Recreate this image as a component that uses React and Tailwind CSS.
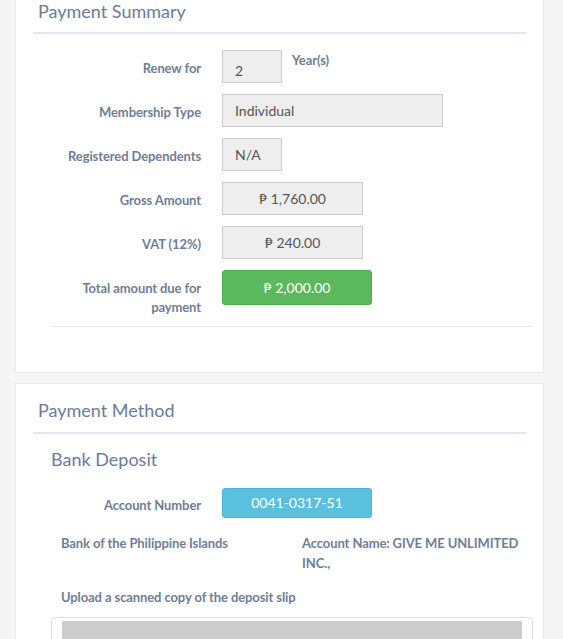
import React from 'react';

const Row = ({ label, children, className = 'mb-[11px]' }) => (
  <div className={`flex ${className}`}>
    <div className="w-[150px] shrink-0 pt-[9px] text-right text-[13px] leading-[19px] font-bold tracking-[-0.1px] text-[#6f7e95]">
      {label}
    </div>
    <div className="ml-[21px] flex items-start">{children}</div>
  </div>
);

const Box = ({ w, children, center }) => (
  <div
    className={`h-[33px] ${w} border border-[#cccccc] bg-[#eeeeee] text-[14px] text-[#555555] leading-[31px] ${
      center ? 'text-center' : 'px-[12px]'
    }`}
  >
    {children}
  </div>
);

const App = () => {
  return (
    <div className="h-[639px] overflow-hidden bg-[#f5f5f5] font-['Lato','Noto_Sans',sans-serif]">
      {/* Payment Summary */}
      <section className="ml-[15px] w-[529px] bg-white border border-t-0 border-[#e7e9ee]">
        <div className="mx-[17px]">
          <h3 className="pl-[5px] text-[18px] leading-[22px] text-[#6c7c94] mb-[10px]">Payment Summary</h3>
          <div className="h-[2px] bg-[#e4e8ee]" />
        </div>

        <div className="ml-[35px] mr-[10px] mt-[16px]">
          <Row label="Renew for">
            <div className="h-[33px] w-[60px] border border-[#cccccc] bg-[#eeeeee] pl-[12px] pt-[9px] text-[14px] leading-[22px] text-[#555555]">
              2
            </div>
            <span className="ml-[10px] mt-[1px] text-[13px] leading-[18px] font-bold tracking-[-0.1px] text-[#6f7e95]">Year(s)</span>
          </Row>
          <Row label="Membership Type">
            <Box w="w-[221px]">Individual</Box>
          </Row>
          <Row label="Registered Dependents">
            <Box w="w-[60px]">N/A</Box>
          </Row>
          <Row label="Gross Amount">
            <Box w="w-[141px]" center>₱ 1,760.00</Box>
          </Row>
          <Row label="VAT (12%)">
            <Box w="w-[141px]" center>₱ 240.00</Box>
          </Row>
          <Row label="Total amount due for payment" className="mb-[9px]">
            <div className="h-[35px] w-[150px] rounded-[3px] border border-[#4cae4c] bg-[#5cb85c] text-center text-[14px] leading-[33px] text-white">
              ₱ 2,000.00
            </div>
          </Row>
          <div className="h-px bg-[#eaeaea]" />
        </div>
        <div className="h-[45px]" />
      </section>

      {/* Payment Method */}
      <section className="ml-[15px] mt-[10px] w-[529px] bg-white border border-b-0 border-[#e7e9ee] pb-[40px]">
        <div className="mx-[17px] pt-[14px]">
          <h3 className="pl-[5px] text-[18px] leading-[24px] text-[#6c7c94] mb-[10px]">Payment Method</h3>
          <div className="h-[2px] bg-[#e4e8ee]" />
        </div>

        <div className="ml-[35px] mr-[10px]">
          <h4 className="mt-[13px] text-[18px] leading-[24px] text-[#6c7c94]">Bank Deposit</h4>

          <div className="mt-[17px] flex">
            <div className="w-[150px] shrink-0 pt-[8px] text-right text-[13px] leading-[19px] font-bold tracking-[-0.1px] text-[#6f7e95]">
              Account Number
            </div>
            <div className="ml-[21px] h-[30px] w-[150px] rounded-[3px] border border-[#46b8da] bg-[#5bc0de] text-center text-[14px] leading-[28px] text-white">
              0041-0317-51
            </div>
          </div>

          <div className="mt-[15px] grid grid-cols-2 text-[13px] leading-[20px] font-bold tracking-[-0.1px] text-[#6f7e95]">
            <div className="px-[10px]">Bank of the Philippine Islands</div>
            <div className="px-[10px]">Account Name: GIVE ME UNLIMITED INC.,</div>
          </div>

          <div className="mt-[14px] px-[10px] text-[13px] leading-[20px] font-bold tracking-[-0.1px] text-[#6f7e95]">
            Upload a scanned copy of the deposit slip
          </div>

          <div className="mt-[10px] rounded-[4px] border border-[#dddddd] pt-[3px] px-[10px] pb-[10px]">
            <div className="h-[120px] bg-[#cccccc]" />
          </div>
        </div>
      </section>
    </div>
  );
};

export default App;
